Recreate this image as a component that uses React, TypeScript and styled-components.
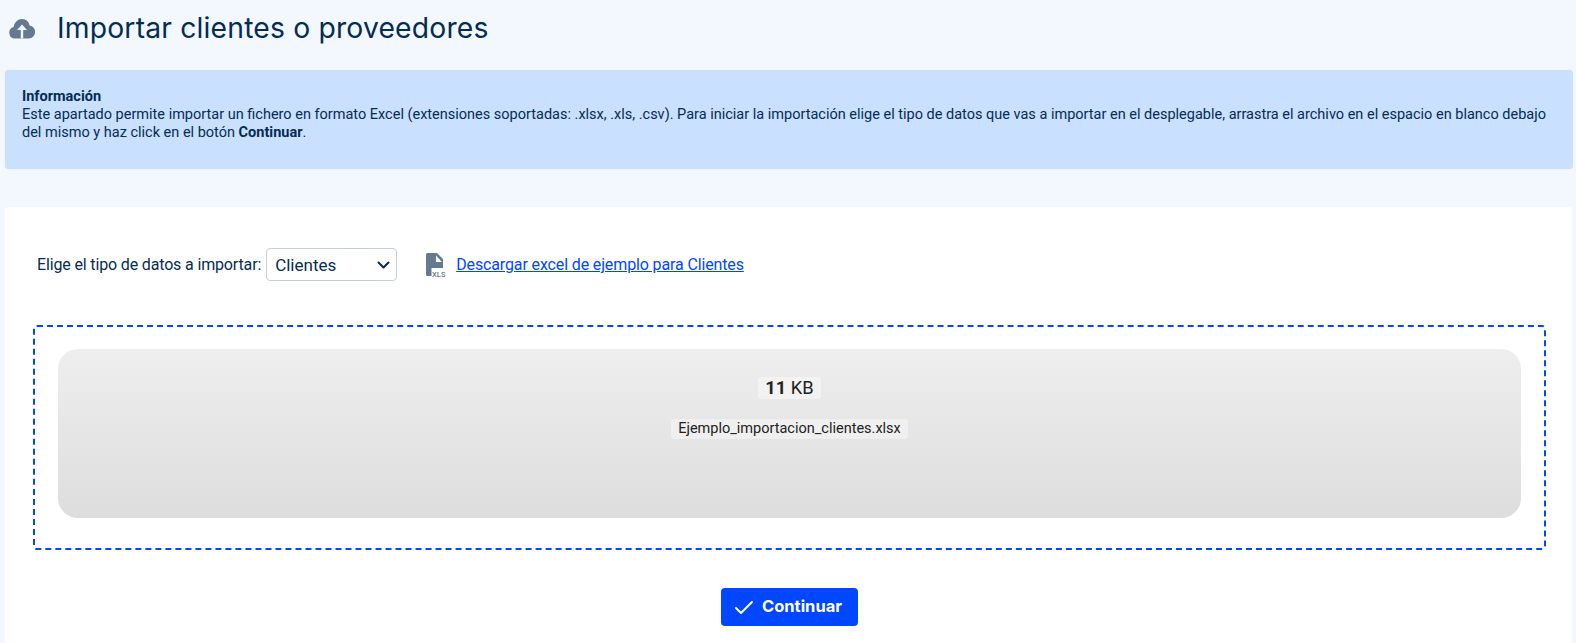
import React from "react";
import styled, { createGlobalStyle } from "styled-components";

const Global = createGlobalStyle`
  html, body { margin: 0; padding: 0; height: 643px; overflow: hidden; background: #f3f8ff; }
  body { font-family: Roboto, "Liberation Sans", sans-serif; color: #042c54; }
`;

const Page = styled.div`
  display: flex;
  flex-direction: column;
  padding: 0 3px 0 5px;
  height: 643px;
  box-sizing: border-box;
`;

const Header = styled.header`
  display: flex;
  align-items: center;
  height: 55px;
  margin-bottom: 15px;
  padding-left: 4px;
`;

const CloudIcon = styled.svg`
  width: 26px;
  height: 22px;
  flex: none;
`;

const Title = styled.h1`
  margin: 0 0 0 22px;
  font-family: Inter, sans-serif;
  font-weight: 400;
  font-size: 28.3px;
  letter-spacing: 0.17px;
  color: #042c54;
`;

const Info = styled.section`
  background: #cae0ff;
  border-radius: 4px;
  height: 99px;
  box-sizing: border-box;
  padding: 18px 17px 16px;
  font-size: 14.5px;
  line-height: 18px;
  margin-bottom: 38px;
  box-shadow: 0 0 1px rgba(4, 44, 84, 0.12);
`;

const InfoTitle = styled.div`
  font-weight: 700;
`;

const Card = styled.section`
  flex: 1;
  background: #fff;
  border-radius: 4px 4px 0 0;
  margin-right: 1px;
  padding: 41px 26px 0 28px;
  display: flex;
  flex-direction: column;
`;

const Toolbar = styled.div`
  display: flex;
  align-items: center;
  height: 33px;
  padding-left: 4px;
`;

const Label = styled.label`
  font-size: 16px;
  margin-right: 5px;
  letter-spacing: -0.15px;
`;

const SelectWrap = styled.div`
  position: relative;
  display: flex;
`;

const Select = styled.select`
  appearance: none;
  width: 131px;
  height: 33px;
  box-sizing: border-box;
  border: 1px solid #c5d0dc;
  border-radius: 4px;
  background: #fff;
  color: #042c54;
  font: 400 17px Roboto, sans-serif;
  padding-left: 8px;
`;

const Chevron = styled.svg`
  position: absolute;
  right: 7px;
  top: 13px;
  width: 13px;
  height: 8px;
  fill: none;
  stroke: #042c54;
  stroke-width: 2;
  stroke-linecap: round;
  stroke-linejoin: round;
  pointer-events: none;
`;

const FileIcon = styled.svg`
  width: 20px;
  height: 24px;
  margin-left: 29px;
  margin-right: 10px;
  flex: none;
`;

const DownloadLink = styled.a`
  font-size: 16px;
  color: #0047ff;
  text-decoration: underline;
  letter-spacing: -0.13px;
`;

const Dropzone = styled.div`
  margin-top: 44px;
  height: 225px;
  box-sizing: border-box;
  border: 2px dashed #0047ff;
  border-radius: 4px;
  padding: 22px 23px;
`;

const Preview = styled.div`
  height: 169px;
  border-radius: 20px;
  background: linear-gradient(to bottom, #eeeeee, #dddddd);
  display: flex;
  flex-direction: column;
  align-items: center;
  padding-top: 28px;
  box-sizing: border-box;
`;

const Chip = styled.div<{ $size: number }>`
  background: rgba(255, 255, 255, 0.4);
  border-radius: 3px;
  color: #222;
  padding: 0 7px;
  font-size: ${(p) => p.$size}px;
  line-height: ${(p) => (p.$size > 15 ? 22 : 20)}px;
`;

const SizeChip = styled(Chip)`
  margin-bottom: 20px;
`;

const Actions = styled.div`
  display: flex;
  justify-content: center;
  margin-top: 38px;
`;

const Button = styled.button`
  display: flex;
  align-items: center;
  gap: 8px;
  height: 38px;
  width: 137px;
  padding: 0 0 2px 13px;
  box-sizing: border-box;
  border: none;
  border-radius: 4px;
  background: #0047ff;
  color: #fff;
  font: 700 16.5px Inter, sans-serif;
`;

const CheckIcon = styled.svg`
  width: 20px;
  height: 20px;
  margin-top: 2px;
  fill: none;
  stroke: #fff;
  stroke-width: 2;
  stroke-linecap: round;
  stroke-linejoin: round;
`;

export default function App() {
  return (
    <Page>
      <Global />
      <Header>
        <CloudIcon viewBox="0 0 26 22">
          <path fill="#647a91" d="M6 21.500A5.800 5.800 0 0 1 4.600 10.100 8.500 8.500 0 0 1 13 2a8 8 0 0 1 7.600 6.400A6.600 6.600 0 0 1 20 21.500z" />
          <path fill="#f3f8ff" d="M13 7.500l5 5.500h-3.800v8.500h-2.400V13H8z" />
        </CloudIcon>
        <Title>Importar clientes o proveedores</Title>
      </Header>
      <Info>
        <InfoTitle>Información</InfoTitle>
        Este apartado permite importar un fichero en formato Excel (extensiones soportadas: .xlsx, .xls, .csv). Para iniciar la importación elige el tipo de datos que vas a importar en el desplegable, arrastra el archivo en el espacio en blanco debajo del mismo y haz click en el botón <b>Continuar</b>.
      </Info>
      <Card>
        <Toolbar>
          <Label>Elige el tipo de datos a importar:</Label>
          <SelectWrap>
            <Select defaultValue="Clientes">
              <option>Clientes</option>
              <option>Proveedores</option>
            </Select>
            <Chevron viewBox="0 0 13 8"><path d="M1.500 1.500L6.500 6.500 11.500 1.500" /></Chevron>
          </SelectWrap>
          <FileIcon viewBox="0 0 20 24">
            <path fill="#647a91" d="M1.500 0H11l6 6v9H5.500v8H1.500A1.500 1.500 0 0 1 0 21.500V1.500A1.500 1.500 0 0 1 1.500 0z" />
            <path fill="#fff" d="M10 2.500l6 6.500h-6z" />
            <text x="6" y="23.500" fontFamily="Roboto, sans-serif" fontSize="7.500" fontWeight="500" fill="#647a91" letterSpacing="0.1">XLS</text>
          </FileIcon>
          <DownloadLink href="#">Descargar excel de ejemplo para Clientes</DownloadLink>
        </Toolbar>
        <Dropzone>
          <Preview>
            <SizeChip $size={18.3}><b>11</b> KB</SizeChip>
            <Chip $size={14.5}>Ejemplo_importacion_clientes.xlsx</Chip>
          </Preview>
        </Dropzone>
        <Actions>
          <Button>
            <CheckIcon viewBox="0 0 20 20"><path d="M2 11l5 5L18 5" /></CheckIcon>
            Continuar
          </Button>
        </Actions>
      </Card>
    </Page>
  );
}
